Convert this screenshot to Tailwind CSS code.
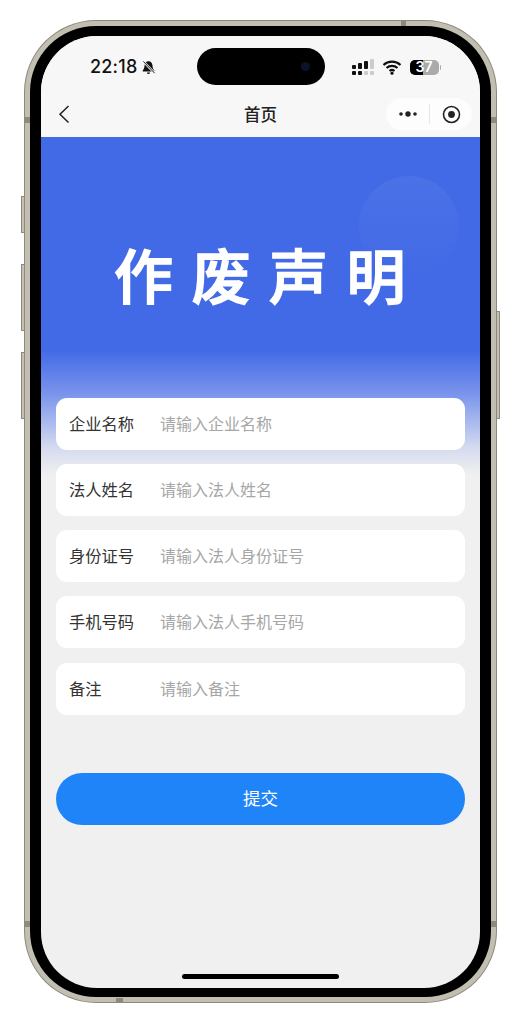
<!DOCTYPE html>
<html lang="zh">
  <head>
    <meta charset="UTF-8" />
    <meta name="viewport" content="width=device-width, initial-scale=1.0" />
    <title>作废声明</title>
    <script src="https://cdn.jsdelivr.net/npm/@tailwindcss/browser@4"></script>
  </head>
  <body class="bg-white overflow-hidden font-['Noto_Sans_CJK_SC','Liberation_Sans',sans-serif]">
    <div class="w-[521px] h-[1024px] pt-[20px] pl-[24px]">
      <!-- phone frame -->
      <div class="relative w-[473px] h-[983px] rounded-[72px] bg-[#8d897b] p-[1px]">
        <!-- side buttons -->
        <div class="absolute left-[-3px] top-[176px] w-[3px] h-[37px] border border-r-0 border-[#8d897b] rounded-l-[1px] bg-[#c4c1b4]"></div>
        <div class="absolute left-[-3px] top-[244px] w-[3px] h-[67px] border border-r-0 border-[#8d897b] rounded-l-[1px] bg-[#c4c1b4]"></div>
        <div class="absolute left-[-3px] top-[332px] w-[3px] h-[67px] border border-r-0 border-[#8d897b] rounded-l-[1px] bg-[#c4c1b4]"></div>
        <div class="absolute right-[-3px] top-[291px] w-[3px] h-[108px] border border-l-0 border-[#8d897b] rounded-r-[1px] bg-[#c4c1b4]"></div>
        <!-- antenna bands -->
        <div class="absolute left-[377px] top-0 w-[5px] h-[6px] bg-[#8d897b]"></div>
        <div class="absolute left-[92px] bottom-0 w-[7px] h-[5px] bg-[#8d897b]"></div>
        <div class="absolute left-0 top-[97px] w-[6px] h-[6px] bg-[#8d897b]"></div>
        <div class="absolute right-0 top-[97px] w-[6px] h-[6px] bg-[#8d897b]"></div>
        <div class="absolute left-0 bottom-[76px] w-[6px] h-[6px] bg-[#8d897b]"></div>
        <div class="absolute right-0 bottom-[76px] w-[6px] h-[6px] bg-[#8d897b]"></div>

        <div class="w-full h-full rounded-[71px] bg-[#c2bfb2] p-[5px]">
          <div class="w-full h-full rounded-[66px] bg-black pt-[10px] px-[11px] pb-[9px]">
            <!-- screen -->
            <div class="relative flex flex-col w-[439px] h-[952px] rounded-[56px] overflow-hidden bg-[#f0f0f0]">
              <!-- status bar -->
              <div class="relative flex items-center justify-between h-[61px] pt-[1px] pl-[49px] pr-[39px] bg-[#f7f7f7]">
                <div class="flex items-center gap-[4px]">
                  <span class="text-[18px] font-medium leading-none tracking-[0.2px] text-[#111] font-['Inter',sans-serif]">22:18</span>
                  <svg class="w-[15px] h-[15px]" viewBox="0 0 16 16">
                    <path d="M8 1.2c2.6 0 4 2 4.2 4.4.2 3 .8 4.4 2 5.6v1H1.8v-1c1.2-1.2 1.8-2.6 2-5.6C4 3.2 5.4 1.2 8 1.2zM6.4 13.4h3.2c0 1-.7 1.6-1.6 1.6s-1.6-.6-1.6-1.6z" fill="#111"/>
                    <path d="M2.5 1.5l12 12.5" stroke="#f7f7f7" stroke-width="2.4"/>
                    <path d="M2.5 1.5l12 12.5" stroke="#111" stroke-width="1"/>
                  </svg>
                </div>
                <div class="flex items-center gap-[8px]">
                  <svg class="w-[23px] h-[16px]" viewBox="0 0 23 16">
                    <rect x="1" y="6" width="4" height="4" rx="1" fill="#111"/>
                    <rect x="1" y="12" width="4" height="4" rx="1" fill="#111"/>
                    <rect x="7" y="4" width="4" height="6" rx="1" fill="#111"/>
                    <rect x="7" y="12" width="4" height="4" rx="1" fill="#111"/>
                    <rect x="13" y="2" width="4" height="8" rx="1" fill="#111"/>
                    <rect x="13" y="12" width="4" height="4" rx="1" fill="#ccc"/>
                    <rect x="19" y="0" width="4" height="10" rx="1" fill="#ccc"/>
                    <rect x="19" y="12" width="4" height="4" rx="1" fill="#ccc"/>
                  </svg>
                  <svg class="w-[20px] h-[16px]" viewBox="0 0 20 16">
                    <path d="M1.5 6C6.2 1.6 13.8 1.6 18.5 6M4.5 9c3-2.8 8-2.8 11 0M7.5 12c1.4-1.2 3.6-1.2 5 0" fill="none" stroke="#111" stroke-width="2.2"/>
                    <circle cx="10" cy="14.2" r="1.6" fill="#111"/>
                  </svg>
                  <div class="flex items-center gap-[1px]">
                    <div class="relative flex items-center justify-center w-[29px] h-[15px] rounded-[5px] overflow-hidden bg-[#aaa]">
                      <div class="absolute left-0 top-0 h-full w-[13px] bg-black"></div>
                      <span class="relative text-[14px] font-semibold leading-none text-white font-['Inter',sans-serif]">37</span>
                    </div>
                    <div class="w-[1.5px] h-[5px] rounded-r-[1px] bg-[#aaa]"></div>
                  </div>
                </div>
                <!-- dynamic island -->
                <div class="absolute left-[156px] top-[12px] flex items-center justify-end w-[128px] h-[37px] pr-[15px] rounded-full bg-black">
                  <div class="w-[9px] h-[9px] rounded-full bg-[#0b1426]"></div>
                </div>
              </div>

              <!-- nav bar -->
              <div class="relative flex items-center justify-between h-[40px] pb-[6px] pl-[17px] pr-[8px] bg-[#f7f7f7]">
                <svg class="w-[12px] h-[20px]" viewBox="0 0 12 20">
                  <path d="M10.5 2L2 10.2 10.5 18.5" fill="none" stroke="#222" stroke-width="1.5"/>
                </svg>
                <span class="absolute left-0 right-0 text-center text-[16.5px] font-medium leading-none text-[#222]">首页</span>
                <div class="flex items-center w-[86px] h-[32px] rounded-full bg-white/70">
                  <div class="flex items-center justify-center w-[43px]">
                    <svg class="w-[20px] h-[8px]" viewBox="0 0 20 8">
                      <circle cx="3" cy="4" r="1.8" fill="#222"/>
                      <circle cx="10" cy="4" r="2.7" fill="#222"/>
                      <circle cx="17" cy="4" r="1.8" fill="#222"/>
                    </svg>
                  </div>
                  <div class="w-px h-[20px] bg-[#e6e6e6]"></div>
                  <div class="flex items-center justify-center flex-1">
                    <svg class="w-[19px] h-[19px]" viewBox="0 0 19 19">
                      <circle cx="9.5" cy="9.5" r="8" fill="none" stroke="#222" stroke-width="1.6"/>
                      <circle cx="9.5" cy="9.5" r="3.4" fill="#222"/>
                    </svg>
                  </div>
                </div>
              </div>

              <!-- banner -->
              <div class="relative h-[338px] shrink-0 overflow-hidden bg-[linear-gradient(180deg,#426ae6_0%,#426ae6_63%,#7a94ec_76%,#d5dbef_92%,#f0f0f0_100%)]">
                <div class="absolute left-[318px] top-[39px] w-[100px] h-[100px] rounded-full bg-linear-to-b from-white/5 to-transparent"></div>
                <h1 class="pt-[102px] pl-[73px] whitespace-nowrap text-[59px] font-medium leading-[70px] tracking-[18.5px] text-white [-webkit-text-stroke:1.5px_white] [stroke-linejoin:round]">作废声明</h1>
              </div>

              <!-- form -->
              <div class="relative flex flex-col gap-[14px] mt-[-77px] px-[15px]">
                <div class="flex items-center h-[52px] pb-[2px] pl-[13px] rounded-[11px] bg-white text-[16px]">
                  <span class="w-[91px] text-[16.25px] text-[#333]">企业名称</span>
                  <span class="text-[#a6a6a6]">请输入企业名称</span>
                </div>
                <div class="flex items-center h-[52px] pb-[2px] pl-[13px] rounded-[11px] bg-white text-[16px]">
                  <span class="w-[91px] text-[16.25px] text-[#333]">法人姓名</span>
                  <span class="text-[#a6a6a6]">请输入法人姓名</span>
                </div>
                <div class="flex items-center h-[52px] pb-[2px] pl-[13px] rounded-[11px] bg-white text-[16px]">
                  <span class="w-[91px] text-[16.25px] text-[#333]">身份证号</span>
                  <span class="text-[#a6a6a6]">请输入法人身份证号</span>
                </div>
                <div class="flex items-center h-[52px] pb-[2px] pl-[13px] rounded-[11px] bg-white text-[16px]">
                  <span class="w-[91px] text-[16.25px] text-[#333]">手机号码</span>
                  <span class="text-[#a6a6a6]">请输入法人手机号码</span>
                </div>
                <div class="flex items-center h-[52px] pb-[2px] mt-[1px] pl-[13px] rounded-[11px] bg-white text-[16px]">
                  <span class="w-[91px] text-[16.25px] text-[#333]">备注</span>
                  <span class="text-[#a6a6a6]">请输入备注</span>
                </div>
                <button class="flex items-center justify-center h-[52px] pb-[2px] mt-[44px] rounded-full bg-[#1e84f8] text-[17.5px] text-white">提交</button>
              </div>

              <!-- home indicator -->
              <div class="absolute left-[141px] bottom-[9px] w-[157px] h-[5px] rounded-full bg-black"></div>
            </div>
          </div>
        </div>
      </div>
    </div>
  </body>
</html>
